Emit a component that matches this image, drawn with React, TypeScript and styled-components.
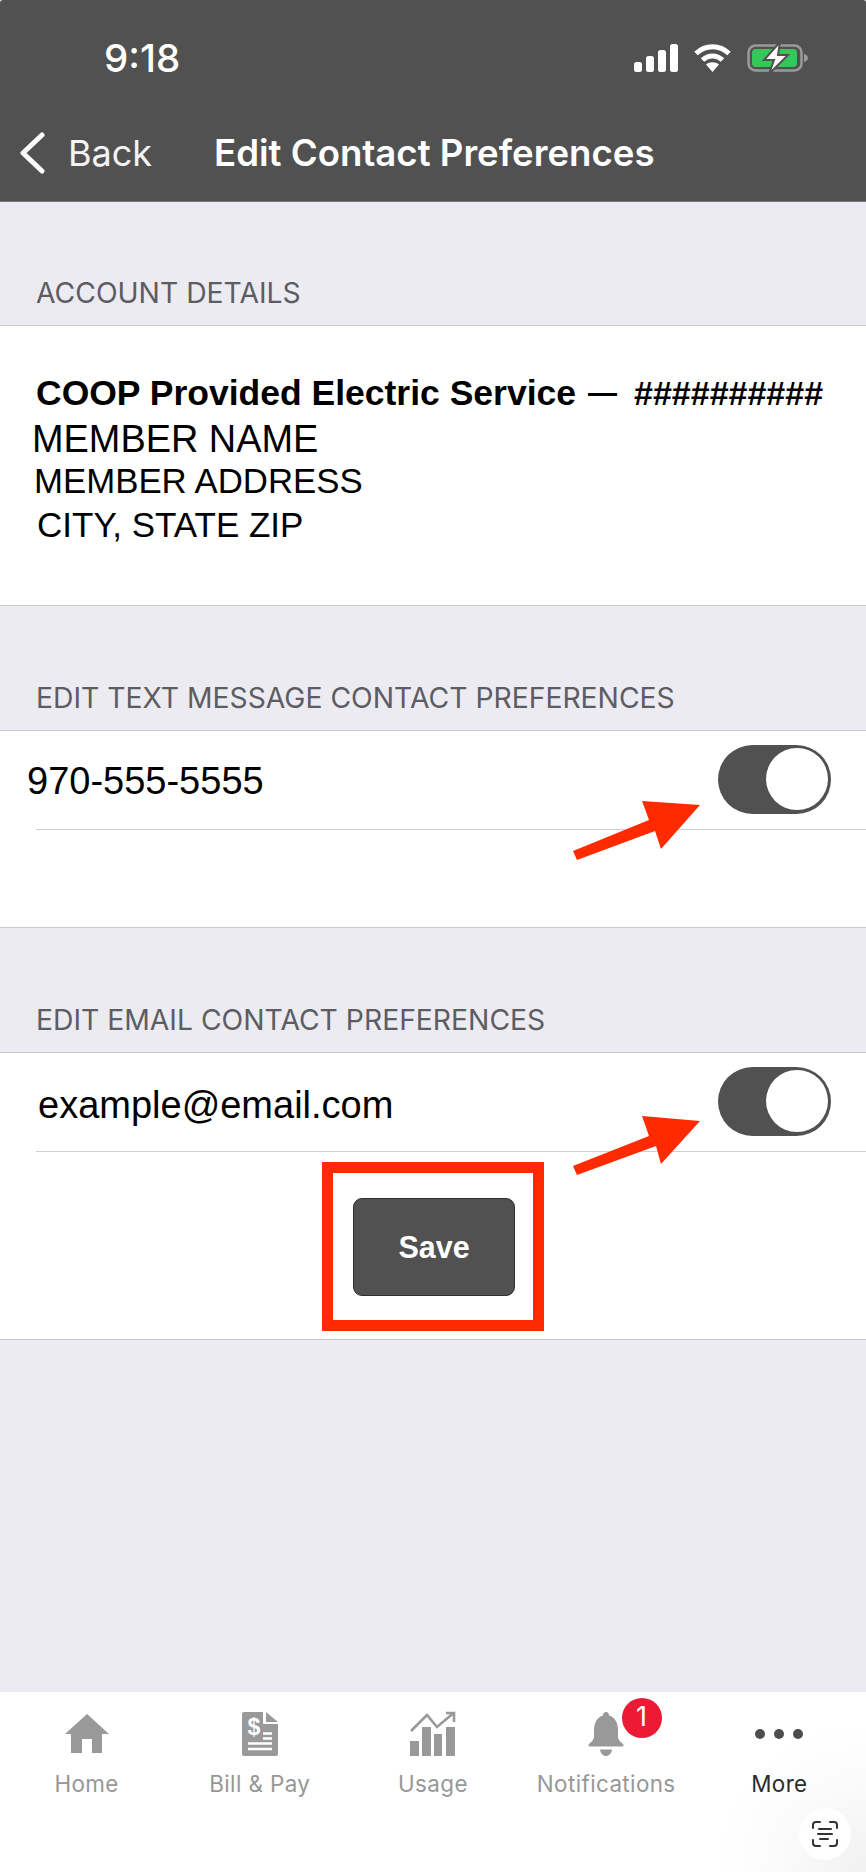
import React from "react";
import styled, { createGlobalStyle } from "styled-components";

const Global = createGlobalStyle`
  html, body { margin: 0; padding: 0; background: #fff; }
  body { font-family: "Liberation Sans", Arial, sans-serif; }
  * { box-sizing: border-box; }
`;

const Page = styled.div`
  width: 866px;
  height: 1872px;
  display: flex;
  flex-direction: column;
  background: #ebebf1;
  overflow: hidden;
`;

const Header = styled.header`
  height: 202px;
  flex: none;
  background: #515151;
  color: #fff;
  font-family: Inter, "Liberation Sans", sans-serif;
  display: flex;
  flex-direction: column;
  border-radius: 3px 3px 0 0;
  border-bottom: 1px solid #777;
`;

const StatusBar = styled.div`
  height: 110px;
  display: flex;
  align-items: center;
  justify-content: space-between;
  padding: 5px 58px 0 104px;
`;

const Clock = styled.span`
  font-size: 38.5px;
  font-weight: 500;
  margin-top: 1px;
`;

const StatusIcons = styled.div`
  display: flex;
  align-items: center;
  gap: 16px;
`;

const NavBar = styled.div`
  height: 86px;
  display: flex;
  align-items: center;
  padding-left: 20px;
`;

const BackLabel = styled.span`
  font-size: 36px;
  font-weight: 400;
  margin-left: 23px;
  width: 146px;
  color: #f4f4f4;
`;

const Title = styled.h1`
  margin: 0;
  font-size: 36.6px;
  font-weight: 600;
`;

const SectionLabel = styled.div<{ $height: number; $pad: number }>`
  height: ${(p) => p.$height}px;
  padding: 0 0 ${(p) => p.$pad}px 36px;
  display: flex;
  align-items: flex-end;
  font-family: Inter, "Liberation Sans", sans-serif;
  font-size: 28.3px;
  line-height: 34px;
  color: #5c5c62;
  border-bottom: 1px solid #c9c9ce;
`;

const WhiteBlock = styled.section<{ $height: number }>`
  position: relative;
  height: ${(p) => p.$height}px;
  background: #fff;
  border-bottom: 1px solid #c9c9ce;
`;

const Account = styled.div`
  padding-top: 46px;
  display: flex;
  flex-direction: column;
`;

const AccountTitle = styled.div`
  display: flex;
  align-items: center;
  height: 43px;
  padding-left: 36px;
  font-size: 35.5px;
  font-weight: 700;
  color: #000;
  white-space: nowrap;
`;

const Dash = styled.span`
  font-size: 29px;
  margin: 0 17px 0 12px;
`;

const Hashes = styled.span`
  font-size: 34px;
  font-weight: 700;
`;

const AccountLine = styled.div<{ $indent: number; $size: number; $gap: number }>`
  height: 43.5px;
  line-height: 43.5px;
  margin-top: ${(p) => p.$gap}px;
  padding-left: ${(p) => p.$indent}px;
  font-size: ${(p) => p.$size}px;
  color: #000;
  white-space: nowrap;
`;

const Row = styled.div<{ $indent: number }>`
  height: 98px;
  display: flex;
  align-items: center;
  justify-content: space-between;
  padding: 0 35px 0 ${(p) => p.$indent}px;
  font-size: 38px;
  color: #000;
`;

const RowText = styled.span<{ $drop: number }>`
  margin-top: ${(p) => p.$drop}px;
`;

const Rule = styled.div`
  height: 1px;
  margin-left: 36px;
  background: #cfcfd3;
`;

const Toggle = styled.div`
  width: 113px;
  height: 69px;
  margin-bottom: 2px;
  border-radius: 35px;
  background: #515151;
  display: flex;
  align-items: center;
  justify-content: flex-end;
  padding-right: 3px;
`;

const Knob = styled.div`
  width: 62px;
  height: 62px;
  border-radius: 50%;
  background: #fff;
`;

const SaveArea = styled.div`
  display: flex;
  justify-content: center;
  padding-top: 10px;
`;

const Highlight = styled.div`
  width: 222px;
  height: 169px;
  border: 11px solid #ff2a00;
  display: flex;
  align-items: center;
  justify-content: center;
`;

const SaveButton = styled.button`
  width: 162px;
  height: 98px;
  margin: 1px 0 0 2px;
  border: 1px solid #2f2f2f;
  border-radius: 9px;
  background: #515151;
  color: #fff;
  font-family: "Liberation Sans", Arial, sans-serif;
  font-size: 30.5px;
  font-weight: 700;
`;

const ArrowMark = styled.svg<{ $top: number }>`
  position: absolute;
  left: 570px;
  top: ${(p) => p.$top}px;
`;

const Filler = styled.div`
  flex: 1;
`;

const TabBar = styled.nav`
  position: relative;
  height: 180px;
  flex: none;
  display: grid;
  grid-template-columns: repeat(5, 1fr);
  align-items: start;
  padding-top: 20px;
  background: radial-gradient(circle at 100% 100%, #f1f1f1 0, #fbfbfb 90px, #ffffff 150px),
    #fff;
`;

const Tab = styled.div`
  position: relative;
  display: flex;
  flex-direction: column;
  align-items: center;
`;

const IconSlot = styled.div`
  height: 44px;
  display: flex;
  align-items: center;
  justify-content: center;
`;

const TabLabel = styled.span<{ $active?: boolean }>`
  margin-top: 14px;
  font-family: Inter, "Liberation Sans", sans-serif;
  font-size: 22.4px;
  line-height: 28px;
  letter-spacing: 0.4px;
  color: ${(p) => (p.$active ? "#2b2b2b" : "#979797")};
  white-space: nowrap;
`;

const Badge = styled.span`
  position: absolute;
  left: 102px;
  top: -14px;
  width: 40px;
  height: 40px;
  border-radius: 50%;
  background: #ec1a34;
  color: #fff;
  font-family: Inter, "Liberation Sans", sans-serif;
  font-size: 27px;
  line-height: 38px;
  text-align: center;
`;

const Dots = styled.div`
  display: flex;
  gap: 9px;
`;

const Dot = styled.span`
  width: 10px;
  height: 10px;
  border-radius: 50%;
  background: #4d4d4d;
`;

const ScanButton = styled.div`
  position: absolute;
  left: 799px;
  top: 116px;
  width: 52px;
  height: 52px;
  border-radius: 50%;
  background: #fff;
  display: flex;
  align-items: center;
  justify-content: center;
`;

const Arrow = ({ top, points }: { top: number; points: string }) => (
  <ArrowMark $top={top} width="134" height="66" viewBox="0 0 134 66">
    <polygon points={points} fill="#ff2a00" />
  </ArrowMark>
);

const Signal = () => (
  <svg width="44" height="28" viewBox="0 0 44 28" fill="#fff">
    <rect x="0" y="18" width="8" height="10" rx="2.5" />
    <rect x="12" y="12" width="8" height="16" rx="2.5" />
    <rect x="24" y="6" width="8" height="22" rx="2.5" />
    <rect x="36" y="0" width="8" height="28" rx="2.5" />
  </svg>
);

const Wifi = () => (
  <svg width="37" height="28" viewBox="0 0 37 28" fill="none" stroke="#fff" strokeWidth="5">
    <path d="M2 9.5C11.5 .5 25.5 .5 35 9.5" />
    <path d="M8.5 16C14.5 10.5 22.5 10.5 28.5 16" />
    <path d="M18.5 28L12 20.5C15.5 17.5 21.5 17.5 25 20.5Z" fill="#fff" stroke="none" />
  </svg>
);

const Battery = () => (
  <svg width="61" height="32" viewBox="0 0 61 32">
    <rect x="1.5" y="3.5" width="53" height="25" rx="7" fill="none" stroke="#9a9a9a" strokeWidth="2.5" />
    <rect x="5" y="7" width="45" height="18" rx="4" fill="#35c759" />
    <path d="M57 12c2 .5 4 2 4 4s-2 3.5-4 4Z" fill="#9a9a9a" />
    <path d="M33 0L17 18H27L22 32L41 13H31Z" fill="#fff" stroke="#515151" strokeWidth="2" />
  </svg>
);

const Chevron = () => (
  <svg width="25" height="42" viewBox="0 0 25 42" fill="none" stroke="#fff" strokeWidth="5" strokeLinecap="round" strokeLinejoin="round">
    <path d="M22 3L3 21L22 39" />
  </svg>
);

const HomeIcon = () => (
  <svg width="44" height="40" viewBox="0 0 44 40" fill="#999">
    <path d="M22 0L44 20H37V39H27V25H17V39H6V20H0Z" />
  </svg>
);

const BillIcon = () => (
  <svg width="36" height="44" viewBox="0 0 36 44">
    <path d="M2 0H21V12H36V42a2 2 0 0 1-2 2H2a2 2 0 0 1-2-2V2a2 2 0 0 1 2-2Z" fill="#999" />
    <path d="M24 0L36 10H24Z" fill="#999" />
    <text x="12" y="23" textAnchor="middle" fontFamily="Liberation Sans" fontWeight="700" fontSize="23" fill="#fff">$</text>
    <path d="M21 21.5H30M21 26.5H30M6 31.5H30M6 37H30" stroke="#fff" strokeWidth="2.4" />
  </svg>
);

const UsageIcon = () => (
  <svg width="48" height="46" viewBox="0 0 48 46" fill="#999">
    <rect x="1" y="30" width="9" height="15" />
    <rect x="13" y="16" width="9" height="29" />
    <rect x="25" y="23" width="8" height="22" />
    <rect x="37" y="16" width="9" height="29" />
    <path d="M2 20L18 4L28 16L44 2.5M37 2H45V11" fill="none" stroke="#999" strokeWidth="2.6" />
  </svg>
);

const BellIcon = () => (
  <svg width="36" height="44" viewBox="0 0 36 44" fill="#999">
    <path d="M18 0c2 0 3 1.5 3 3.5C27 5 30 11 30 18V25c0 3 3 5 5 7c1 1.5.5 2.5-1 2.5H2C.5 34.5 0 33.5 1 32c2-2 5-4 5-7V18C6 11 9 5 15 3.5C15 1.5 16 0 18 0Z" />
    <path d="M12 37.5H24c-.5 4-3 6.5-6 6.5s-5.5-2.5-6-6.5Z" />
  </svg>
);

const ScanIcon = () => (
  <svg width="26" height="26" viewBox="0 0 26 26" fill="none" stroke="#333" strokeWidth="2" strokeLinecap="round">
    <path d="M1 7V4a3 3 0 0 1 3-3H8M18 1h4a3 3 0 0 1 3 3V7M25 19v3a3 3 0 0 1-3 3H18M8 25H4a3 3 0 0 1-3-3V19" />
    <path d="M7 8H19M6 13H20M8 18H16" />
  </svg>
);

const tabs = [
  { label: "Home", icon: <HomeIcon /> },
  { label: "Bill & Pay", icon: <BillIcon /> },
  { label: "Usage", icon: <UsageIcon /> },
  { label: "Notifications", icon: <BellIcon />, badge: "1" },
  {
    label: "More",
    active: true,
    icon: (
      <Dots>
        <Dot />
        <Dot />
        <Dot />
      </Dots>
    ),
  },
];

export default function App() {
  return (
    <Page>
      <Global />
      <Header>
        <StatusBar>
          <Clock>9:18</Clock>
          <StatusIcons>
            <Signal />
            <Wifi />
            <Battery />
          </StatusIcons>
        </StatusBar>
        <NavBar>
          <Chevron />
          <BackLabel>Back</BackLabel>
          <Title>Edit Contact Preferences</Title>
        </NavBar>
      </Header>

      <SectionLabel $height={124} $pad={15}>ACCOUNT DETAILS</SectionLabel>
      <WhiteBlock $height={280}>
        <Account>
          <AccountTitle>
            COOP Provided Electric Service
            <Dash>—</Dash>
            <Hashes>##########</Hashes>
          </AccountTitle>
          <AccountLine $indent={32} $size={37.9} $gap={3}>MEMBER NAME</AccountLine>
          <AccountLine $indent={34} $size={34.8} $gap={-2.3}>MEMBER ADDRESS</AccountLine>
          <AccountLine $indent={37} $size={35} $gap={0}>CITY, STATE ZIP</AccountLine>
        </Account>
      </WhiteBlock>

      <SectionLabel $height={125} $pad={15}>EDIT TEXT MESSAGE CONTACT PREFERENCES</SectionLabel>
      <WhiteBlock $height={197}>
        <Row $indent={27}>
          <RowText $drop={3}>970-555-5555</RowText>
          <Toggle>
            <Knob />
          </Toggle>
        </Row>
        <Rule />
        <Arrow top={68} points="3,52 79,21 72,2 130,6 91,50 85,32 7,61" />
      </WhiteBlock>

      <SectionLabel $height={125} $pad={15}>EDIT EMAIL CONTACT PREFERENCES</SectionLabel>
      <WhiteBlock $height={287}>
        <Row $indent={38}>
          <RowText $drop={7}>example@email.com</RowText>
          <Toggle>
            <Knob />
          </Toggle>
        </Row>
        <Rule />
        <SaveArea>
          <Highlight>
            <SaveButton>Save</SaveButton>
          </Highlight>
        </SaveArea>
        <Arrow top={61} points="3,52 79,22 72,2 130,7 91,50 86,32 7,61" />
      </WhiteBlock>

      <Filler />

      <TabBar>
        {tabs.map((t) => (
          <Tab key={t.label}>
            <IconSlot>{t.icon}</IconSlot>
            <TabLabel $active={t.active}>{t.label}</TabLabel>
            {t.badge && <Badge>{t.badge}</Badge>}
          </Tab>
        ))}
        <ScanButton>
          <ScanIcon />
        </ScanButton>
      </TabBar>
    </Page>
  );
}
